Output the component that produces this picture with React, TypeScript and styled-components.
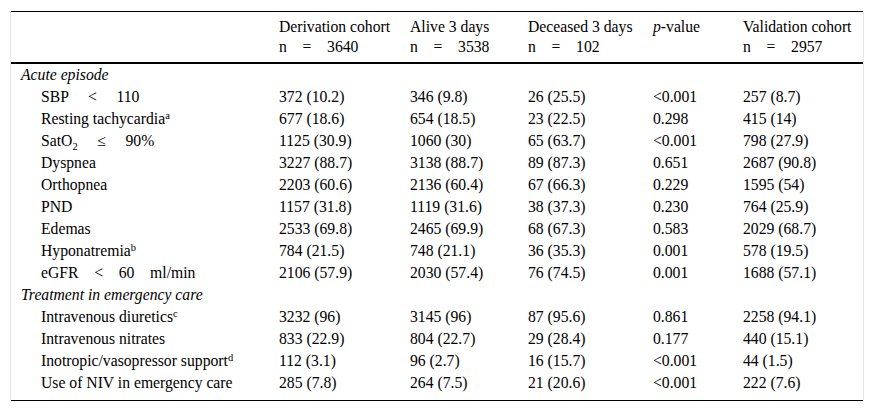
import type { ReactNode } from 'react';
import styled, { createGlobalStyle } from 'styled-components';

const GlobalStyle = createGlobalStyle`
  html, body {
    margin: 0;
    padding: 0;
    background: #ffffff;
  }
  body {
    font-family: "Liberation Serif", "Times New Roman", serif;
    color: #000000;
  }
`;

const Frame = styled.div`
  margin: 11px 0 0 10px;
  width: 852px;
  border-left: 1px solid #e6e6e6;
  border-right: 1px solid #e6e6e6;
`;

const Table = styled.table`
  width: 852px;
  table-layout: fixed;
  border-collapse: collapse;
  border-top: 1px solid #000;
  border-bottom: 1px solid #000;
  font-family: "Liberation Serif", "Times New Roman", serif;
  font-size: 15.7px;
  color: #000;
  white-space: pre;
`;

const HeadCell = styled.th`
  text-align: left;
  vertical-align: top;
  font-weight: normal;
  line-height: 20px;
  padding: 5px 0 5px 10px;
  border-bottom: 2px solid #000;

  em {
    font-style: italic;
  }
`;

const SectionCell = styled.td`
  font-style: italic;
  line-height: 22px;
  padding: 0 0 0 10px;
`;

const Cell = styled.td<{ $last?: boolean }>`
  line-height: 22px;
  padding: 0 0 ${(p) => (p.$last ? '6px' : '0')} 10px;
  vertical-align: top;
`;

const LabelCell = styled(Cell)`
  padding-left: 30px;
`;

const Sup = styled.sup`
  font-size: 10.5px;
  line-height: 0;
  vertical-align: 5px;
`;

const Sub = styled.sub`
  font-size: 10.5px;
  line-height: 0;
  vertical-align: -4px;
`;

type Row =
  | { kind: 'section'; title: string }
  | {
      kind: 'data';
      label: ReactNode;
      values: [string, string, string, string, string];
    };

const rows: Row[] = [
  { kind: 'section', title: 'Acute episode' },
  {
    kind: 'data',
    label: <>SBP     &lt;     110</>,
    values: ['372 (10.2)', '346 (9.8)', '26 (25.5)', '<0.001', '257 (8.7)'],
  },
  {
    kind: 'data',
    label: (
      <>
        Resting tachycardia<Sup>a</Sup>
      </>
    ),
    values: ['677 (18.6)', '654 (18.5)', '23 (22.5)', '0.298', '415 (14)'],
  },
  {
    kind: 'data',
    label: (
      <>
        SatO<Sub>2</Sub>     ≤     90%
      </>
    ),
    values: ['1125 (30.9)', '1060 (30)', '65 (63.7)', '<0.001', '798 (27.9)'],
  },
  {
    kind: 'data',
    label: 'Dyspnea',
    values: ['3227 (88.7)', '3138 (88.7)', '89 (87.3)', '0.651', '2687 (90.8)'],
  },
  {
    kind: 'data',
    label: 'Orthopnea',
    values: ['2203 (60.6)', '2136 (60.4)', '67 (66.3)', '0.229', '1595 (54)'],
  },
  {
    kind: 'data',
    label: 'PND',
    values: ['1157 (31.8)', '1119 (31.6)', '38 (37.3)', '0.230', '764 (25.9)'],
  },
  {
    kind: 'data',
    label: 'Edemas',
    values: ['2533 (69.8)', '2465 (69.9)', '68 (67.3)', '0.583', '2029 (68.7)'],
  },
  {
    kind: 'data',
    label: (
      <>
        Hyponatremia<Sup>b</Sup>
      </>
    ),
    values: ['784 (21.5)', '748 (21.1)', '36 (35.3)', '0.001', '578 (19.5)'],
  },
  {
    kind: 'data',
    label: <>eGFR    &lt;    60    ml/min</>,
    values: ['2106 (57.9)', '2030 (57.4)', '76 (74.5)', '0.001', '1688 (57.1)'],
  },
  { kind: 'section', title: 'Treatment in emergency care' },
  {
    kind: 'data',
    label: (
      <>
        Intravenous diuretics<Sup>c</Sup>
      </>
    ),
    values: ['3232 (96)', '3145 (96)', '87 (95.6)', '0.861', '2258 (94.1)'],
  },
  {
    kind: 'data',
    label: 'Intravenous nitrates',
    values: ['833 (22.9)', '804 (22.7)', '29 (28.4)', '0.177', '440 (15.1)'],
  },
  {
    kind: 'data',
    label: (
      <>
        Inotropic/vasopressor support<Sup>d</Sup>
      </>
    ),
    values: ['112 (3.1)', '96 (2.7)', '16 (15.7)', '<0.001', '44 (1.5)'],
  },
  {
    kind: 'data',
    label: 'Use of NIV in emergency care',
    values: ['285 (7.8)', '264 (7.5)', '21 (20.6)', '<0.001', '222 (7.6)'],
  },
];

const colWidths = [258, 131, 118, 125, 90, 130];

export default function App() {
  return (
    <>
      <GlobalStyle />
      <Frame>
        <Table>
          <colgroup>
            {colWidths.map((w, i) => (
              <col key={i} style={{ width: w }} />
            ))}
          </colgroup>
          <thead>
            <tr>
              <HeadCell />
              <HeadCell>
                Derivation cohort
                <br />
                n    =    3640
              </HeadCell>
              <HeadCell>
                Alive 3 days
                <br />
                n    =    3538
              </HeadCell>
              <HeadCell>
                Deceased 3 days
                <br />
                n    =    102
              </HeadCell>
              <HeadCell>
                <em>p</em>-value
              </HeadCell>
              <HeadCell>
                Validation cohort
                <br />
                n    =    2957
              </HeadCell>
            </tr>
          </thead>
          <tbody>
            {rows.map((row, i) => {
              const last = i === rows.length - 1;
              if (row.kind === 'section') {
                return (
                  <tr key={i}>
                    <SectionCell colSpan={6}>{row.title}</SectionCell>
                  </tr>
                );
              }
              return (
                <tr key={i}>
                  <LabelCell $last={last}>{row.label}</LabelCell>
                  {row.values.map((v, j) => (
                    <Cell key={j} $last={last}>
                      {v}
                    </Cell>
                  ))}
                </tr>
              );
            })}
          </tbody>
        </Table>
      </Frame>
    </>
  );
}
